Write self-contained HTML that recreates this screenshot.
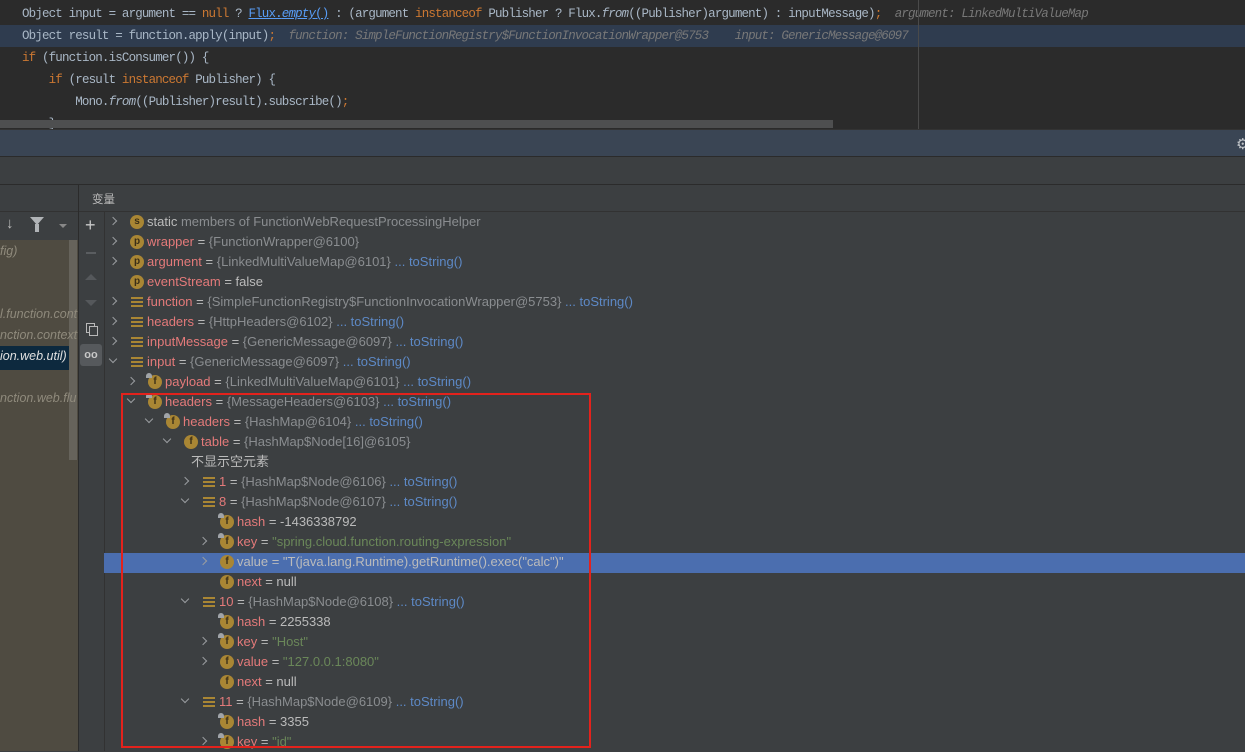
<!DOCTYPE html>
<html><head><meta charset="utf-8"><style>
*{margin:0;padding:0;box-sizing:border-box}
body{width:1245px;height:751px;overflow:hidden;background:#3c3f41;position:relative;font-family:"Liberation Sans","Noto Sans CJK SC",sans-serif}
.a{position:absolute}
#code{left:0;top:0;width:1245px;height:129px;background:#2b2b2b;font-family:"Liberation Mono",monospace;font-size:12.5px;letter-spacing:-0.84px;color:#a9b7c6}
.cl{position:absolute;left:0;padding-left:2px;height:22px;line-height:22px;white-space:pre;width:1245px}
.k{color:#cc7832}.lk{color:#589df6;text-decoration:underline}.h{color:#787878;font-style:italic}.i{font-style:italic}
.row{position:absolute;height:20px;line-height:20px;font-size:13px;white-space:pre;color:#8a8d90}
.n{color:#e47a7a}.w{color:#bbbbbb}.t{color:#5d89c6}.g{color:#6a8759}
.ic{position:absolute;top:3px;width:14px;height:14px;border-radius:50%;background:#a98634;color:#3b2f17;font-size:10px;line-height:14px;text-align:center;font-weight:bold}
.lk2{position:absolute;top:1px;width:6px;height:5px;border-radius:3px 3px 0 0;background:#a0a4a8}
.ln{position:absolute;top:5px;width:12px;height:10px;background:repeating-linear-gradient(#a98634 0 2px,transparent 2px 4px)}
.ar{position:absolute;top:6px;width:6px;height:6px;border-right:1.5px solid #9a9da0;border-bottom:1.5px solid #9a9da0}
.r{transform:rotate(-45deg)}.d{transform:rotate(45deg);top:4px}
.lp{position:absolute;font-size:12.5px;font-style:italic;color:#8f8a7c;white-space:pre}
</style></head><body>
<div id="code" class="a">
<div class="cl" style="top:3px">   Object input = argument == <span class="k">null</span> ? <span class="lk">Flux.<i>empty</i>()</span> : (argument <span class="k">instanceof</span> Publisher ? Flux.<i>from</i>((Publisher)argument) : inputMessage)<span class="k">;</span>  <span class="h">argument: LinkedMultiValueMap</span></div>
<div class="cl" style="top:25px;background:#2f3c4f">   Object result = function.apply(input)<span class="k">;</span>  <span class="h">function: SimpleFunctionRegistry$FunctionInvocationWrapper@5753    input: GenericMessage@6097</span></div>
<div class="cl" style="top:47px">   <span class="k">if</span> (function.isConsumer()) {</div>
<div class="cl" style="top:69px">       <span class="k">if</span> (result <span class="k">instanceof</span> Publisher) {</div>
<div class="cl" style="top:91px">           Mono.<i>from</i>((Publisher)result).subscribe()<span class="k">;</span></div>
<div class="cl" style="top:113px">       }</div>
<div class="a" style="left:918px;top:0;width:1px;height:129px;background:#4a4a4a"></div>
<div class="a" style="left:0;top:120px;width:833px;height:8px;background:#4e4f50"></div>
</div>
<div class="a" style="left:0;top:129px;width:1245px;height:27px;background:#3a4554;border-top:1px solid #333"></div>
<div class="a" style="left:1236px;top:135px;color:#c0c4c8;font-size:15px">⚙</div>
<div class="a" style="left:0;top:156px;width:1245px;height:28px;background:#3c3f41;border-top:1px solid #2b2b2b"></div>
<div class="a" style="left:0;top:184px;width:1245px;height:28px;background:#3c3f41;border-top:1px solid #2b2b2b;border-bottom:1px solid #323232"></div>
<div class="a" style="left:78px;top:184px;width:1px;height:567px;background:#2b2b2b"></div>
<div class="a" style="left:92px;top:191px;font-size:11.5px;color:#bbb">变量</div>
<div class="a" style="left:0;top:240px;width:78px;height:511px;background:#4f4b41"></div>
<div class="a" style="left:69px;top:240px;width:8px;height:220px;background:#66635b"></div>
<div class="a" style="left:0;top:346px;width:69px;height:24px;background:#0d293e"></div>
<div class="a" style="left:6px;top:215px;color:#bbb;font-size:15px">↓</div>
<div class="a" style="left:30px;top:217px;width:0;height:0;border-left:7px solid transparent;border-right:7px solid transparent;border-top:8px solid #b0b3b6"></div>
<div class="a" style="left:35px;top:224px;width:4px;height:8px;background:#b0b3b6"></div>
<div class="a" style="left:59px;top:224px;width:0;height:0;border-left:4px solid transparent;border-right:4px solid transparent;border-top:4px solid #888"></div>
<div class="lp" style="left:0;top:244px">fig)</div>
<div class="lp" style="left:0;top:307px">l.function.cont</div>
<div class="lp" style="left:0;top:328px">nction.context</div>
<div class="lp" style="left:0;top:349px;color:#e0e0e0">ion.web.util)</div>
<div class="lp" style="left:0;top:391px">nction.web.flu</div>
<div class="a" style="left:104px;top:212px;width:1px;height:539px;background:#323232"></div>
<div class="a" style="left:85px;top:215px;color:#c8c8c8;font-size:18px">+</div>
<div class="a" style="left:86px;top:252px;width:10px;height:2px;background:#5a5d60"></div>
<div class="a" style="left:85px;top:274px;border-left:6px solid transparent;border-right:6px solid transparent;border-bottom:6px solid #55585b"></div>
<div class="a" style="left:85px;top:300px;border-left:6px solid transparent;border-right:6px solid transparent;border-top:6px solid #55585b"></div>
<div class="a" style="left:86px;top:323px;width:9px;height:10px;border:1.5px solid #b8b8b8"></div>
<div class="a" style="left:89px;top:326px;width:9px;height:10px;border:1.5px solid #b8b8b8;background:#3c3f41"></div>
<div class="a" style="left:80px;top:344px;width:22px;height:22px;background:#56595c;border-radius:3px;color:#c8c8c8;font-size:11px;text-align:center;line-height:22px;font-weight:bold">oo</div>
<div class="a" style="left:104px;top:553px;width:1141px;height:20px;background:#4b6eaf"></div>
<div id="tree"></div>
<div class="a" style="left:121px;top:393px;width:470px;height:355px;border:2px solid #e3221c"></div>
<script>
const rows=[
[0,'r','s','<span class="w">static</span> members of FunctionWebRequestProcessingHelper'],
[0,'r','p','<span class="n">wrapper</span> <span class="w">=</span> {FunctionWrapper@6100}'],
[0,'r','p','<span class="n">argument</span> <span class="w">=</span> {LinkedMultiValueMap@6101} <span class="t">... toString()</span>'],
[0,'','p','<span class="n">eventStream</span> <span class="w">= false</span>'],
[0,'r','l','<span class="n">function</span> <span class="w">=</span> {SimpleFunctionRegistry$FunctionInvocationWrapper@5753} <span class="t">... toString()</span>'],
[0,'r','l','<span class="n">headers</span> <span class="w">=</span> {HttpHeaders@6102} <span class="t">... toString()</span>'],
[0,'r','l','<span class="n">inputMessage</span> <span class="w">=</span> {GenericMessage@6097} <span class="t">... toString()</span>'],
[0,'d','l','<span class="n">input</span> <span class="w">=</span> {GenericMessage@6097} <span class="t">... toString()</span>'],
[1,'r','F','<span class="n">payload</span> <span class="w">=</span> {LinkedMultiValueMap@6101} <span class="t">... toString()</span>'],
[1,'d','F','<span class="n">headers</span> <span class="w">=</span> {MessageHeaders@6103} <span class="t">... toString()</span>'],
[2,'d','F','<span class="n">headers</span> <span class="w">=</span> {HashMap@6104} <span class="t">... toString()</span>'],
[3,'d','f','<span class="n">table</span> <span class="w">=</span> {HashMap$Node[16]@6105}'],
[4,'','x','<span class="w">不显示空元素</span>'],
[4,'r','l','<span class="n">1</span> <span class="w">=</span> {HashMap$Node@6106} <span class="t">... toString()</span>'],
[4,'d','l','<span class="n">8</span> <span class="w">=</span> {HashMap$Node@6107} <span class="t">... toString()</span>'],
[5,'','F','<span class="n">hash</span> <span class="w">= -1436338792</span>'],
[5,'r','F','<span class="n">key</span> <span class="w">=</span> <span class="g">"spring.cloud.function.routing-expression"</span>'],
[5,'r','f','<span class="w">value = "T(java.lang.Runtime).getRuntime().exec("calc")"</span>'],
[5,'','f','<span class="n">next</span> <span class="w">= null</span>'],
[4,'d','l','<span class="n">10</span> <span class="w">=</span> {HashMap$Node@6108} <span class="t">... toString()</span>'],
[5,'','F','<span class="n">hash</span> <span class="w">= 2255338</span>'],
[5,'r','F','<span class="n">key</span> <span class="w">=</span> <span class="g">"Host"</span>'],
[5,'r','f','<span class="n">value</span> <span class="w">=</span> <span class="g">"127.0.0.1:8080"</span>'],
[5,'','f','<span class="n">next</span> <span class="w">= null</span>'],
[4,'d','l','<span class="n">11</span> <span class="w">=</span> {HashMap$Node@6109} <span class="t">... toString()</span>'],
[5,'','F','<span class="n">hash</span> <span class="w">= 3355</span>'],
[5,'r','F','<span class="n">key</span> <span class="w">=</span> <span class="g">"id"</span>']];
let h='';
rows.forEach((r,i)=>{const y=212+i*20;const b=105+r[0]*18;
h+=`<div class="row" style="left:0;top:${y}px;width:1245px">`;
if(r[1])h+=`<div class="ar ${r[1]}" style="left:${b+5}px"></div>`;
if(r[2]==='l')h+=`<div class="ln" style="left:${b+26}px"></div>`;
else if(r[2]!=='x'){const L=r[2]==='F'?'f':r[2];h+=`<div class="ic" style="left:${b+25}px">${L}</div>`;if(r[2]==='F')h+=`<div class="lk2" style="left:${b+23}px"></div>`;}
h+=`<span style="position:absolute;left:${r[2]==='x'?b+14:b+42}px">${r[3]}</span></div>`;});
document.getElementById('tree').innerHTML=h;
</script>
</body></html>
